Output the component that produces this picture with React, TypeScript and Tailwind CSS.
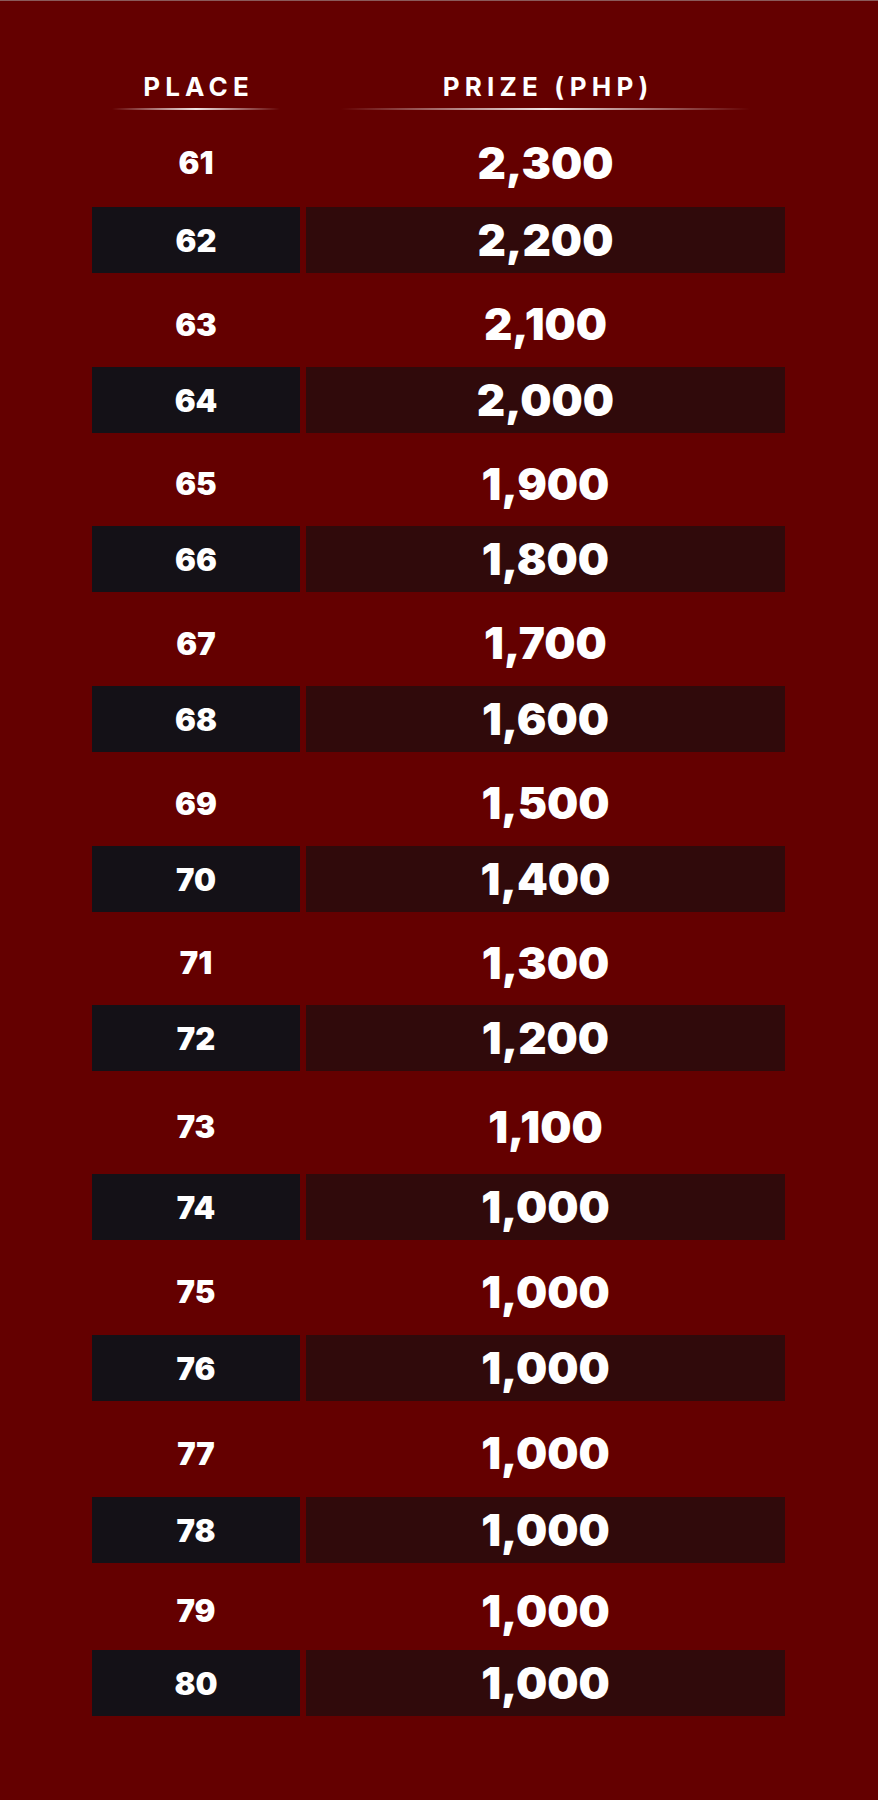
import React from "react";

const rows = [
  { place: "61", prize: "2,300", gap: "h-[97px]", next: { place: "62", prize: "2,200" } },
  { place: "63", prize: "2,100", gap: "h-[94px]", next: { place: "64", prize: "2,000" } },
  { place: "65", prize: "1,900", gap: "h-[93px]", next: { place: "66", prize: "1,800" } },
  { place: "67", prize: "1,700", gap: "h-[94px]", next: { place: "68", prize: "1,600" } },
  { place: "69", prize: "1,500", gap: "h-[94px]", next: { place: "70", prize: "1,400" } },
  { place: "71", prize: "1,300", gap: "h-[93px]", next: { place: "72", prize: "1,200" } },
  { place: "73", prize: "1,100", gap: "h-[103px]", next: { place: "74", prize: "1,000" } },
  { place: "75", prize: "1,000", gap: "h-[95px]", next: { place: "76", prize: "1,000" } },
  { place: "77", prize: "1,000", gap: "h-[96px]", next: { place: "78", prize: "1,000" } },
  { place: "79", prize: "1,000", gap: "h-[87px]", next: { place: "80", prize: "1,000" } },
];

const placeText = "text-[31px] font-black text-white leading-none";
const prizeText = "text-[44px] font-black text-white leading-none";

function App() {
  return (
    <div
      className="w-[878px] h-[1800px] bg-[#640000] border-t border-[#8a5a5a] px-[92px]"
      style={{ fontFamily: "Inter, 'Open Sans', sans-serif" }}
    >
      {/* header */}
      <div className="grid grid-cols-[208px_479px] gap-x-[6px] pt-[72px]">
        <div className="flex flex-col items-center">
          <span className="text-[26px] font-bold tracking-[0.2em] pl-[0.2em] text-white leading-[28px]">PLACE</span>
          <div className="mt-[7px] h-[2px] w-[168px] bg-[linear-gradient(90deg,transparent,rgba(255,255,255,0.9),transparent)]" />
        </div>
        <div className="flex flex-col items-center">
          <span className="text-[26px] font-bold tracking-[0.2em] pl-[0.2em] text-white leading-[28px]">PRIZE (PHP)</span>
          <div className="mt-[7px] h-[2px] w-[409px] bg-[linear-gradient(90deg,transparent,rgba(255,255,255,0.9),transparent)]" />
        </div>
      </div>

      <div className="flex flex-col">
        {rows.map((r) => (
          <React.Fragment key={r.place}>
            <div className={`grid grid-cols-[208px_479px] gap-x-[6px] pt-[8px] ${r.gap}`}>
              <div className="flex items-center justify-center">
                <span className={placeText}>{r.place}</span>
              </div>
              <div className="flex items-center justify-center">
                <span className={prizeText}>{r.prize}</span>
              </div>
            </div>
            <div className="grid grid-cols-[208px_479px] gap-x-[6px] h-[66px]">
              <div className="flex items-center justify-center bg-[#141117]">
                <span className={placeText}>{r.next.place}</span>
              </div>
              <div className="flex items-center justify-center bg-[#300a0b]">
                <span className={prizeText}>{r.next.prize}</span>
              </div>
            </div>
          </React.Fragment>
        ))}
      </div>
    </div>
  );
}

export default App;
